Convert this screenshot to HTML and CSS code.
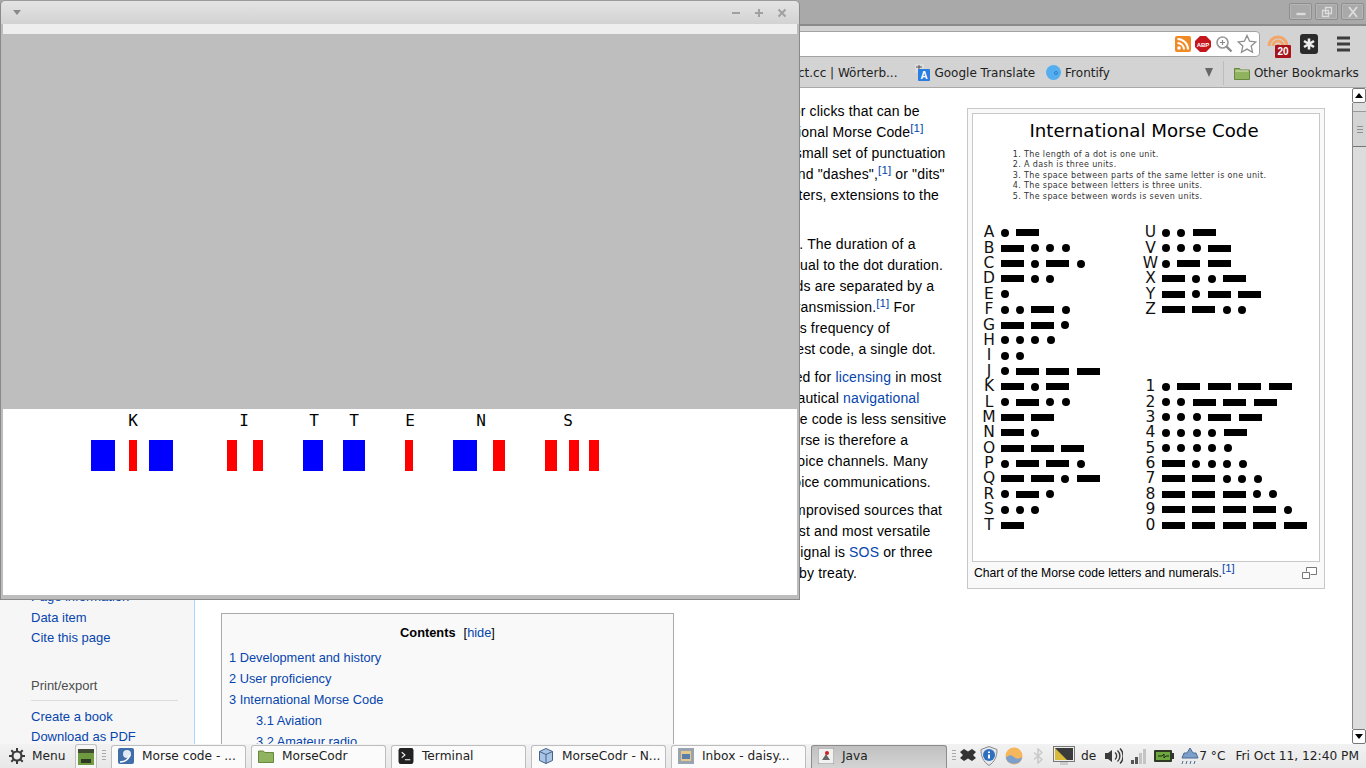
FILE: index.html
```html
<!DOCTYPE html>
<html lang="en">
<head>
<meta charset="utf-8">
<title>Morse code desktop</title>
<link rel="stylesheet" href="styles.css">
</head>
<body>
<div class="desktop">
  <div class="browser">
    <div class="titlebar">
      <span class="wbtn"><svg width="14" height="14" viewBox="0 0 14 14"><path d="M2.500 9h9" stroke="#dcdcdc" stroke-width="2.400"/></svg></span>
      <span class="wbtn"><svg width="14" height="14" viewBox="0 0 14 14"><path d="M5.500 2.500h6v6h-6zM2.500 5.500h6v6h-6z" fill="#a9a9a9" stroke="#dcdcdc" stroke-width="1.300"/></svg></span>
      <span class="wbtn"><svg width="14" height="14" viewBox="0 0 14 14"><path d="M3 2l8 10M11 2l-8 10" stroke="#dcdcdc" stroke-width="2"/></svg></span>
    </div>
    <div class="toolbar">
      <div class="omnibox">
        <svg width="16" height="16" viewBox="0 0 16 16"><rect width="16" height="16" rx="2" fill="#f08a24"/><circle cx="4" cy="12" r="1.800" fill="#fff"/><path d="M2.500 7a6.500 6.500 0 0 1 6.500 6.500M2.500 3a10.500 10.500 0 0 1 10.500 10.500" fill="none" stroke="#fff" stroke-width="2"/></svg>
        <svg width="16" height="16" viewBox="0 0 16 16"><path d="M5 0h6l5 5v6l-5 5H5l-5-5V5z" fill="#c4161c"/><text x="8" y="10.500" class="abp">ABP</text></svg>
        <svg width="18" height="18" viewBox="0 0 18 18"><circle cx="7.500" cy="7.500" r="5.500" fill="#fff" stroke="#9a9a9a" stroke-width="1.600"/><path d="M11.500 11.500l5 5" stroke="#8a8a8a" stroke-width="2.400"/><path d="M5 7.500h5M7.500 5v5" stroke="#888" stroke-width="1.200"/></svg>
        <svg width="20" height="20" viewBox="0 0 20 20"><path d="M10 1.500l2.600 5.700 6.200.7-4.600 4.200 1.300 6.100L10 15.100l-5.500 3.100 1.300-6.100-4.600-4.200 6.200-.7z" fill="#fff" stroke="#8c8c8c" stroke-width="1.300"/></svg>
      </div>
      <div class="exts">
        <span class="ext-feed"><svg width="22" height="26" viewBox="0 0 22 26"><path d="M2 15a9 9 0 0 1 18 0M6 15a5 5 0 0 1 10 0" fill="none" stroke="#f2a66a" stroke-width="3"/><circle cx="11" cy="15" r="2" fill="#e8914d"/></svg><span class="badge">20</span></span>
        <svg width="18" height="22" viewBox="0 0 18 22"><rect y="1" width="18" height="20" rx="3" fill="#2b2b2b"/><path d="M9 5.500v11M4 8l10 6M14 8l-10 6" stroke="#eee" stroke-width="2.600"/></svg>
        <svg class="burger" width="13" height="16" viewBox="0 0 13 16"><path d="M0 2h13M0 8h13M0 14h13" stroke="#3c3c3c" stroke-width="3"/></svg>
      </div>
    </div>
    <div class="bookmarks">
      <span class="bm bm-cut">dict.cc | Wörterb...</span>
      <span class="bm bm-gt"><svg width="16" height="18" viewBox="0 0 16 18"><rect x="1" y="0" width="9" height="9" fill="#ddd"/><path d="M2 3h6M5 1v7" stroke="#555"/><rect x="4" y="5" width="12" height="12" rx="1" fill="#2a7de1"/><text x="10" y="15" class="gt">A</text></svg>Google Translate</span>
      <span class="bm"><svg width="15" height="15" viewBox="0 0 15 15"><circle cx="7.500" cy="7.500" r="7.500" fill="#55aef0"/><circle cx="10" cy="8" r="1.500" fill="none" stroke="#2b7fc4"/></svg>Frontify</span>
      <span class="bm-more"></span>
      <span class="bm-sep"></span>
      <span class="bm"><svg width="16" height="14" viewBox="0 0 16 14"><path d="M.5 2.500h5l1 1.500h9v9.500H.5z" fill="#8fb35f" stroke="#68883f"/><path d="M1.500 5h13" stroke="#dfe8c8"/></svg>Other Bookmarks</span>
    </div>
    <div class="page">
      <aside class="sidebar">
        <a>Page information</a>
        <a>Data item</a>
        <a>Cite this page</a>
        <h3>Print/export</h3>
        <a>Create a book</a>
        <a>Download as PDF</a>
      </aside>
      <main class="content">
        <div class="lead">
          <div class="article">
            <p>Morse code is a method of transmitting text information, as a series of on-off tones, lights, or clicks that can be<br>
            directly understood by a skilled listener or observer without special equipment. The International Morse Code<sup>[1]</sup><br>
            encodes the ISO basic Latin alphabet, some extra Latin letters, the Arabic numerals and a small set of punctuation<br>
            and procedural signals as standardized sequences of short and long signals called "dots" and "dashes",<sup>[1]</sup> or "dits"<br>
            and "dahs". Because many non-English natural languages use more than the 26 Roman letters, extensions to the<br>
            Morse alphabet exist for those languages.</p>
            <p>Each character (letter or numeral) is represented by a unique sequence of dots and dashes. The duration of a<br>
            dash is three times the duration of a dot. Each dot or dash is followed by a short silence, equal to the dot duration.<br>
            The letters of a word are separated by a space equal to three dots (one dash), and the words are separated by a<br>
            space equal to seven dots. To increase the speed of the codes, it is carefully designed for transmission.<sup>[1]</sup> For<br>
            efficiency, the length of each character in Morse is approximately inversely proportional to its frequency of<br>
            occurrence in English. Thus the most common letter in English, the letter "E", has the shortest code, a single dot.</p>
            <p>Morse code is most popular among amateur radio operators, although it is no longer required for <a>licensing</a> in most<br>
            countries. Pilots and air traffic controllers usually need only a cursory understanding. Aeronautical <a>navigational</a><br>
            aids, such as VORs and NDBs, constantly identify in Morse code. Compared to voice, Morse code is less sensitive<br>
            to poor signal conditions, yet still comprehensible to humans without a decoding device. Morse is therefore a<br>
            useful alternative to synthesized speech for sending automated, digital data streams over voice channels. Many<br>
            amateur radio repeaters, for example, identify with Morse, even though they are used for voice communications.</p>
            <p>In an emergency, Morse code can be generated by improvised sources that can be easily improvised sources that<br>
            can be easily "keyed" on and off, such as a flashlight or mirrors, making it one of the simplest and most versatile<br>
            methods of long-distance telecommunication in use today too. The most common distress signal is <a>SOS</a> or three<br>
            dots, three dashes and three dots, which is widely, internationally recognized by all nations by treaty.</p>
          </div>
          <figure class="thumb">
            <div class="chart">
              <div class="chart-title">International Morse Code</div>
              <ol class="rules">
                <li>The length of a dot is one unit.</li>
                <li>A dash is three units.</li>
                <li>The space between parts of the same letter is one unit.</li>
                <li>The space between letters is three units.</li>
                <li>The space between words is seven units.</li>
              </ol>
              <div class="codes">
                <div class="col">
                  <div class="mr"><b>A</b><i></i><s></s></div>
                  <div class="mr"><b>B</b><s></s><i></i><i></i><i></i></div>
                  <div class="mr"><b>C</b><s></s><i></i><s></s><i></i></div>
                  <div class="mr"><b>D</b><s></s><i></i><i></i></div>
                  <div class="mr"><b>E</b><i></i></div>
                  <div class="mr"><b>F</b><i></i><i></i><s></s><i></i></div>
                  <div class="mr"><b>G</b><s></s><s></s><i></i></div>
                  <div class="mr"><b>H</b><i></i><i></i><i></i><i></i></div>
                  <div class="mr"><b>I</b><i></i><i></i></div>
                  <div class="mr"><b>J</b><i></i><s></s><s></s><s></s></div>
                  <div class="mr"><b>K</b><s></s><i></i><s></s></div>
                  <div class="mr"><b>L</b><i></i><s></s><i></i><i></i></div>
                  <div class="mr"><b>M</b><s></s><s></s></div>
                  <div class="mr"><b>N</b><s></s><i></i></div>
                  <div class="mr"><b>O</b><s></s><s></s><s></s></div>
                  <div class="mr"><b>P</b><i></i><s></s><s></s><i></i></div>
                  <div class="mr"><b>Q</b><s></s><s></s><i></i><s></s></div>
                  <div class="mr"><b>R</b><i></i><s></s><i></i></div>
                  <div class="mr"><b>S</b><i></i><i></i><i></i></div>
                  <div class="mr"><b>T</b><s></s></div>
                </div>
                <div class="col">
                  <div class="mr"><b>U</b><i></i><i></i><s></s></div>
                  <div class="mr"><b>V</b><i></i><i></i><i></i><s></s></div>
                  <div class="mr"><b>W</b><i></i><s></s><s></s></div>
                  <div class="mr"><b>X</b><s></s><i></i><i></i><s></s></div>
                  <div class="mr"><b>Y</b><s></s><i></i><s></s><s></s></div>
                  <div class="mr"><b>Z</b><s></s><s></s><i></i><i></i></div>
                  <div class="mr"></div>
                  <div class="mr"></div>
                  <div class="mr"></div>
                  <div class="mr"></div>
                  <div class="mr"><b>1</b><i></i><s></s><s></s><s></s><s></s></div>
                  <div class="mr"><b>2</b><i></i><i></i><s></s><s></s><s></s></div>
                  <div class="mr"><b>3</b><i></i><i></i><i></i><s></s><s></s></div>
                  <div class="mr"><b>4</b><i></i><i></i><i></i><i></i><s></s></div>
                  <div class="mr"><b>5</b><i></i><i></i><i></i><i></i><i></i></div>
                  <div class="mr"><b>6</b><s></s><i></i><i></i><i></i><i></i></div>
                  <div class="mr"><b>7</b><s></s><s></s><i></i><i></i><i></i></div>
                  <div class="mr"><b>8</b><s></s><s></s><s></s><i></i><i></i></div>
                  <div class="mr"><b>9</b><s></s><s></s><s></s><s></s><i></i></div>
                  <div class="mr"><b>0</b><s></s><s></s><s></s><s></s><s></s></div>
                </div>
              </div>
            </div>
            <figcaption><span>Chart of the Morse code letters and numerals.<sup>[1]</sup></span>
              <svg width="15" height="12" viewBox="0 0 15 12"><path d="M4.500 4.500V.5h10v7h-6M.5 5.500h7v6h-7z" fill="#fff" stroke="#777"/></svg>
            </figcaption>
          </figure>
        </div>
        <nav class="toc">
          <div class="toc-title"><b>Contents</b><span>[<a>hide</a>]</span></div>
          <a>1 Development and history</a>
          <a>2 User proficiency</a>
          <a>3 International Morse Code</a>
          <a class="sub">3.1 Aviation</a>
          <a class="sub">3.2 Amateur radio</a>
        </nav>
      </main>
      <div class="scrollbar">
        <span class="sb-btn"><span class="up"></span></span>
        <span class="sb-track"><span class="sb-thumb"><span></span><span></span><span></span></span></span>
        <span class="sb-btn"><span class="down"></span></span>
      </div>
    </div>
  </div>

  <div class="taskbar">
    <span class="menu"><svg width="16" height="16" viewBox="0 0 16 16"><circle cx="8" cy="8" r="4.500" fill="none" stroke="#3a3a3a" stroke-width="2.200"/><path d="M8 0v3M8 13v3M0 8h3M13 8h3M2.300 2.300l2 2M11.700 11.700l2 2M13.700 2.300l-2 2M4.300 11.700l-2 2" stroke="#3a3a3a" stroke-width="2"/></svg>Menu</span>
    <span class="show"><svg width="16" height="16" viewBox="0 0 16 16"><rect width="16" height="16" fill="#6f9a3f"/><rect width="16" height="4" fill="#3f4a33"/><rect x="3" y="10" width="10" height="4" fill="#2f3a26"/></svg></span>
    <span class="grip"></span>
    <span class="task"><svg viewBox="0 0 16 16"><rect width="16" height="16" rx="2" fill="#3f6ea8"/><circle cx="9" cy="6" r="4" fill="#dfeaf5"/><path d="M2 14c4 0 8-2 10-7" stroke="#fff" stroke-width="1.500" fill="none"/></svg>Morse code - ...</span>
    <span class="task"><svg viewBox="0 0 16 15"><path d="M.5 2.500h5l1 1.500h9v10H.5z" fill="#8fb35f" stroke="#68883f"/></svg>MorseCodr</span>
    <span class="task"><svg viewBox="0 0 14 15"><rect width="14" height="15" rx="2" fill="#222"/><path d="M3 4l3 2.500L3 9M6 11h5" stroke="#fff" fill="none"/></svg>Terminal</span>
    <span class="task"><svg viewBox="0 0 14 16"><path d="M7 .5l6.500 3v9L7 15.500.5 12.500v-9z" fill="#a9c4e4" stroke="#44628a"/><path d="M.5 3.500L7 6.500l6.500-3M7 6.500v9" fill="none" stroke="#44628a"/></svg>MorseCodr - N...</span>
    <span class="task"><svg viewBox="0 0 16 16"><rect width="16" height="16" fill="#9aa4b0"/><rect x="3" y="3" width="10" height="10" fill="#e6c98a"/><path d="M4 6h8v5H4z" fill="#5b7ea8"/></svg>Inbox - daisy...</span>
    <span class="task active"><svg viewBox="0 0 16 16"><rect width="16" height="16" fill="#f1f1f1" stroke="#888"/><path d="M4 12l4-6 4 6z" fill="#666"/><circle cx="9" cy="5" r="2" fill="#c22"/></svg>Java</span>
    <span class="tray">
      <span class="grip"></span>
      <svg class="t-drop" width="16" height="13" viewBox="0 0 16 13"><path d="M0 3L4 0l4 2.500L12 0l4 3-3 3 3 3-4 3-4-2.500L4 12 0 9l3-3z" fill="#333"/></svg>
      <svg class="t-shield" width="18" height="20" viewBox="0 0 18 20"><path d="M9 .5l8 3c0 7-2 12-8 16-6-4-8-9-8-16z" fill="#e4e8ec" stroke="#888"/><circle cx="9" cy="9" r="6" fill="#2f6fc0"/><path d="M9 5.500v1.500M9 8.500v4" stroke="#fff" stroke-width="2"/></svg>
      <svg class="t-sphere" width="18" height="18" viewBox="0 0 18 18"><circle cx="9" cy="9" r="8.500" fill="#f5b65c"/><path d="M.8 11c3-4 6-3 8.200-1s5 2 8.200 0a8.500 8.500 0 0 1-16.400 1z" fill="#7d9fcb"/></svg>
      <svg class="t-bt" width="10" height="16" viewBox="0 0 10 16"><path d="M1 4.500l8 7-4 3.500V1l4 3.500-8 7" fill="none" stroke="#c8c8c8" stroke-width="1.500"/></svg>
      <svg class="t-mon" width="22" height="20" viewBox="0 0 22 20"><rect x=".5" y=".5" width="21" height="15" fill="#eee" stroke="#777"/><rect x="2" y="2" width="18" height="12" fill="#3a3a3a"/><path d="M2 2l12 12H2z" fill="#d8b93a"/><path d="M7 16h8v3H7z" fill="#ccc"/></svg>
      <span class="de">de</span>
      <svg class="t-vol" width="18" height="16" viewBox="0 0 18 16"><path d="M0 5h3l4-3v12l-4-3H0z" fill="#3a3a3a"/><path d="M10 4.500a4.500 4.500 0 0 1 0 7M12.500 2.500a7.500 7.500 0 0 1 0 11M15 .5a10.500 10.500 0 0 1 0 15" fill="none" stroke="#3a3a3a" stroke-width="1.400"/></svg>
      <svg class="t-sig" width="16" height="16" viewBox="0 0 16 16"><rect y="12" width="3" height="4" fill="#555"/><rect x="4" y="9" width="3" height="7" fill="#555"/><rect x="8" y="5" width="3" height="11" fill="#c4c4c4"/><rect x="12" y="1" width="3" height="15" fill="#c4c4c4"/></svg>
      <svg class="t-bat" width="20" height="12" viewBox="0 0 20 12"><rect width="18" height="12" rx="1" fill="#2f3a26"/><rect x="2" y="2" width="14" height="8" fill="#6fa83f"/><rect x="18" y="3" width="2" height="6" fill="#333"/><path d="M4 6h4l2-2v4l2-2h3" stroke="#1c2a10" fill="none"/></svg>
      <span class="weather"><svg width="18" height="18" viewBox="0 0 18 18"><path d="M9 1l3 5h3l2 5H1l2-5h3z" fill="#7d9fcb" stroke="#4d6a92"/><path d="M2 14l-1 3M6 14l-1 3M10 14l-1 3M14 14l-1 3" stroke="#4d6a92"/></svg>7 °C</span>
      <span class="clock">Fri Oct 11, 12:40 PM</span>
    </span>
  </div>

  <section class="java">
    <div class="java-title">
      <span class="java-menu"></span>
      <span class="java-ctl">
        <svg width="10" height="10" viewBox="0 0 10 10"><path d="M1 5h8" stroke="#a0a0a0" stroke-width="2"/></svg>
        <svg width="10" height="10" viewBox="0 0 10 10"><path d="M1 5h8M5 1v8" stroke="#a0a0a0" stroke-width="2"/></svg>
        <svg width="10" height="10" viewBox="0 0 10 10"><path d="M1.500 1.500l7 7M8.500 1.500l-7 7" stroke="#a0a0a0" stroke-width="2"/></svg>
      </span>
    </div>
    <div class="java-menubar"></div>
    <div class="java-grey"></div>
    <div class="java-canvas">
      <div class="word">
        <div class="glyph"><span class="nudge">K</span><div class="bars"><em class="b w24"></em><em class="r w8 g14"></em><em class="b w24 g12"></em></div></div>
        <div class="glyph far"><span class="nudge-back">I</span><div class="bars"><em class="r w10"></em><em class="r w10 g16"></em></div></div>
        <div class="glyph"><span class="nudge">T</span><div class="bars"><em class="b w20"></em></div></div>
        <div class="glyph near"><span>T</span><div class="bars"><em class="b w22"></em></div></div>
        <div class="glyph"><span class="nudge">E</span><div class="bars"><em class="r w8"></em></div></div>
        <div class="glyph"><span class="nudge-r">N</span><div class="bars"><em class="b w24"></em><em class="r w12 g16"></em></div></div>
        <div class="glyph"><span class="nudge-l">S</span><div class="bars"><em class="r w12"></em><em class="r w10 g12"></em><em class="r w10 g10"></em></div></div>
      </div>
    </div>
  </section>
</div>
</body>
</html>
```
FILE: styles.css
```css
* { box-sizing: border-box; }
html, body { margin: 0; padding: 0; height: 100%; overflow: hidden; }
body { font-family: "Liberation Sans", Arial, sans-serif; }

.desktop { position: relative; width: 1366px; height: 768px; overflow: hidden; display: flex; flex-direction: column; background: #fff; }

/* Browser */
.browser { flex: 1; min-height: 0; display: flex; flex-direction: column; }
.titlebar { height: 26px; flex: none; background: #a9a9a9; border-bottom: 2px solid #8b8b8b; display: flex; justify-content: flex-end; align-items: flex-start; gap: 3px; padding: 3px 2px 0 0; }
.wbtn { width: 23px; height: 17px; border: 1px solid #8e8e8e; border-radius: 2px; background: #a9a9a9; box-shadow: inset 0 0 0 1px #b6b6b6; display: flex; align-items: center; justify-content: center; }
.toolbar { height: 32px; flex: none; background: #d3d3d3; display: flex; align-items: flex-start; padding: 5px 12px 0 0; }
.omnibox { width: 1260px; height: 26px; background: #fff; border: 1px solid #a3a3a3; border-radius: 0 4px 4px 0; display: flex; align-items: center; justify-content: flex-end; gap: 4px; padding-right: 2px; }
.abp { font: bold 6px "Liberation Sans", sans-serif; fill: #fff; text-anchor: middle; }
.exts { flex: 1; display: flex; align-items: center; padding-left: 7px; }
.ext-feed { position: relative; width: 22px; height: 26px; }
.ext-feed svg { display: block; }
.badge { position: absolute; left: 8px; top: 14px; width: 16px; height: 13px; background: #a8121a; color: #fff; font: bold 10px/13px "Liberation Sans", sans-serif; text-align: center; border-radius: 1px; }
.exts > svg { margin-left: 11px; }
.exts > .burger { margin-left: 19px; }
.bookmarks { height: 30px; flex: none; background: #d3d3d3; border-bottom: 1px solid #a9a9a9; display: flex; align-items: center; font: 12px "DejaVu Sans", sans-serif; color: #222; white-space: nowrap; }
.bm { display: flex; align-items: center; gap: 4px; }
.bm-cut { margin-left: 787px; margin-right: 17px; }
.bm-gt { margin-right: 11px; }
.gt { font: bold 10px "Liberation Sans", sans-serif; fill: #fff; text-anchor: middle; }
.bm-more { width: 0; height: 0; border-left: 4px solid transparent; border-right: 4px solid transparent; border-top: 9px solid #666; margin-left: 95px; }
.bm-sep { width: 1px; height: 24px; background: #bcbcbc; margin: 0 10px; }

/* Page */
.page { flex: 1; min-height: 0; display: flex; overflow: hidden; }
.sidebar { width: 195px; flex: none; background: #f6f6f6; border-right: 1px solid #a7d7f9; padding: 499px 0 0 31px; font-size: 13px; }
.sidebar a { display: block; color: #0645ad; line-height: 20.500px; white-space: nowrap; }
.sidebar h3 { margin: 29px 16px 6px 0; padding-bottom: 6px; font: 13px/16px "Liberation Sans", sans-serif; color: #4d4d4d; border-bottom: 1px solid #dcdcdc; }
.content { flex: 1; min-width: 0; padding-left: 26px; }
.lead { display: flex; }
.article { width: 746px; flex: none; padding-top: 13px; font-size: 14px; letter-spacing: .15px; line-height: 21px; color: #000; white-space: nowrap; overflow: hidden; }
.article p { margin: 0 0 7px; }
.article a, .toc a { color: #0645ad; }
sup { font-size: 11.500px; line-height: 0; color: #0645ad; vertical-align: 5px; }
.thumb { width: 358px; height: 481px; margin: 20px 0 0 0; flex: none; padding: 4px; background: #f9f9f9; border: 1px solid #c8c8c8; }
.chart { height: 449px; background: #fff; border: 1px solid #c8c8c8; padding-top: 6px; font-family: "DejaVu Sans", sans-serif; color: #000; }
.chart-title { text-align: center; font-size: 18.200px; line-height: 22px; padding-right: 4px; }
.rules { margin: 8px 0 0; padding-left: 51px; font-size: 8px; letter-spacing: .36px; line-height: 10.400px; color: #333; }
.codes { display: flex; margin-top: 23px; padding-left: 6px; }
.col { width: 161.500px; flex: none; }
.mr { height: 15.400px; display: flex; align-items: center; gap: 7.400px; }
.mr b { width: 20px; flex: none; margin-right: -5.900px; font-weight: normal; font-size: 15.500px; line-height: 15px; text-align: center; color: #111; }
.mr i { width: 8px; height: 8px; border-radius: 50%; background: #000; flex: none; }
.mr s { width: 23px; height: 7px; background: #000; flex: none; }
.thumb figcaption { display: flex; align-items: center; justify-content: space-between; padding: 2px 3px 0 2px; font-size: 12.200px; line-height: 18px; color: #000; white-space: nowrap; }
.toc { width: 453px; margin-top: 22px; padding: 10px 7px; background: #f9f9f9; border: 1px solid #aaa; font-size: 12.800px; display: flex; flex-direction: column; }
.toc-title { display: flex; justify-content: center; gap: 8px; line-height: 18px; margin-bottom: 5px; }
.toc > a { line-height: 21px; display: block; }
.toc > a.sub { padding-left: 27px; }
.scrollbar { width: 16px; flex: none; background: #fff; display: flex; flex-direction: column; padding: 0 0 0 2px; }
.sb-btn { height: 15px; flex: none; border: 1px solid #777; border-radius: 2px; background: #fff; display: flex; align-items: center; justify-content: center; }
.up { border-left: 4px solid transparent; border-right: 4px solid transparent; border-bottom: 5px solid #000; }
.down { border-left: 4px solid transparent; border-right: 4px solid transparent; border-top: 5px solid #000; }
.sb-track { flex: 1; padding-top: 8px; background: #dcdcdc; border-left: 1px solid #8a8a8a; }
.sb-thumb { height: 36px; border-top: 1px solid #9a9a9a; border-bottom: 1px solid #777; background: #d4d4d4; display: flex; flex-direction: column; justify-content: center; align-items: center; gap: 2px; }
.sb-thumb span { width: 6px; height: 1px; background: #909090; }

/* Taskbar */
.taskbar { height: 24px; flex: none; background: linear-gradient(#f2f2f2, #e8e8e8); display: flex; align-items: stretch; font: 12.200px "DejaVu Sans", sans-serif; color: #222; white-space: nowrap; }
.menu { width: 75px; flex: none; display: flex; align-items: center; gap: 7px; padding: 0 0 1px 9px; }
.show { width: 22px; flex: none; margin-right: 5px; border: 1px solid #c0c0c0; border-bottom: 0; border-radius: 3px 3px 0 0; background: #f6f6f6; display: flex; align-items: center; justify-content: center; }
.grip { width: 4px; margin: 6px 5px 6px 0; background: repeating-linear-gradient(#aaa 0 1px, transparent 1px 3px); flex: none; }
.task { width: 135px; flex: none; margin: 1px 5px 0 0; padding: 0 0 2px 6px; gap: 8px; background: #fbfbfb; border: 1px solid #bdbdbd; border-bottom: 0; border-radius: 3px 3px 0 0; display: flex; align-items: center; }
.task svg { width: 16px; height: 16px; flex: none; }
.task.active { width: 136px; background: linear-gradient(#c0c0c0, #d4d4d4); border-color: #8c8c8c; margin-right: 0; }
.tray { margin-left: 5px; flex: 1; display: flex; align-items: center; padding-bottom: 1px; }
.tray svg { flex: none; }
.tray .grip { margin: 6px 4px 6px 0; align-self: stretch; }
.t-shield { margin-left: 4px; }
.t-sphere { margin-left: 7px; }
.t-bt { margin-left: 10px; }
.t-mon { margin-left: 10px; }
.de { margin-left: 6px; }
.t-vol { margin-left: 9px; }
.t-sig { margin-left: 8px; }
.t-bat { margin-left: 7px; }
.weather { margin-left: 7px; display: flex; align-items: center; }
.clock { margin-left: 10px; }

/* Java window */
.java { position: absolute; left: 0; top: 0; width: 800px; height: 600px; background: #fff; border: 1px solid #8a8a8a; border-top: 1px solid #9a9a9a; border-radius: 5px 5px 0 0; box-shadow: inset 2px 0 0 #bdbdbd, inset -2px 0 0 #bdbdbd, inset 0 -4px 0 #bdbdbd; padding: 0 2px 4px; display: flex; flex-direction: column; }
.java-title { height: 23px; flex: none; margin: 0 -2px; background: linear-gradient(#e4e4e4, #d2d2d2); border-radius: 5px 5px 0 0; display: flex; align-items: center; justify-content: space-between; padding: 0 12px; }
.java-menu { width: 0; height: 0; border-left: 4px solid transparent; border-right: 4px solid transparent; border-top: 5px solid #8a8a8a; }
.java-ctl { display: flex; gap: 13px; }
.java-menubar { height: 10px; flex: none; background: #eee; }
.java-grey { height: 375px; flex: none; background: #bebebe; }
.java-canvas { flex: 1; background: #fff; padding-left: 88px; }
.word { display: flex; gap: 40px; }
.glyph { display: flex; flex-direction: column; align-items: center; }
.glyph > span { width: 0; display: flex; justify-content: center; font: 16px/24px "DejaVu Sans Mono", monospace; color: #000; height: 24px; }
.glyph > .nudge { margin-left: 2px; }
.glyph > .nudge-back { margin-right: 2px; }
.glyph > .nudge-r { margin-left: 4px; }
.glyph > .nudge-l { margin-right: 8px; }
.glyph.far { margin-left: 14px; }
.glyph.near { margin-left: -20px; }
.bars { display: flex; margin-top: 7px; }
.bars em { display: block; height: 31px; }
.b { background: #00f; }
.r { background: #f00; }
.w8 { width: 8px; } .w10 { width: 10px; } .w12 { width: 12px; } .w20 { width: 20px; } .w22 { width: 22px; } .w24 { width: 24px; }
.g10 { margin-left: 10px; } .g12 { margin-left: 12px; } .g14 { margin-left: 14px; } .g16 { margin-left: 16px; }
```
